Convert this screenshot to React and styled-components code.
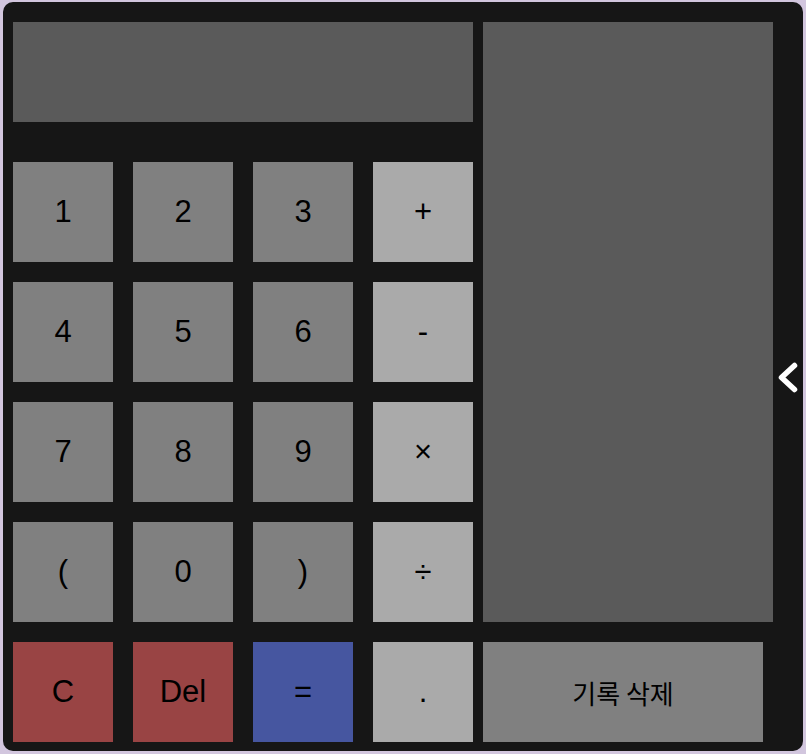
import React from 'react';
import styled, { createGlobalStyle } from 'styled-components';

const GlobalStyle = createGlobalStyle`
  html, body {
    margin: 0;
    padding: 0;
    background-color: #d2c6de;
  }
  body {
    padding: 2px 3px;
    font-family: "Liberation Sans", Arial, "Noto Sans CJK KR", sans-serif;
  }
`;

const Calculator = styled.div`
  position: relative;
  box-sizing: border-box;
  width: 800px;
  height: 749px;
  padding: 20px 10px 0 10px;
  background-color: #161616;
  border-radius: 10px;
  display: flex;
  flex-direction: column;
  gap: 20px;
`;

const TopArea = styled.div`
  display: flex;
  align-items: flex-start;
`;

const LeftColumn = styled.div`
  display: flex;
  flex-direction: column;
  gap: 40px;
  width: 460px;
`;

const Display = styled.div`
  height: 100px;
  background-color: #5a5a5a;
`;

const Keypad = styled.div`
  display: grid;
  grid-template-columns: repeat(4, 100px);
  grid-auto-rows: 100px;
  gap: 20px;
`;

const History = styled.div`
  width: 290px;
  height: 600px;
  margin-left: 10px;
  background-color: #5a5a5a;
`;

const BottomRow = styled.div`
  display: flex;
  gap: 20px;
`;

const keyColors = {
  num: '#808080',
  op: '#aaaaaa',
  danger: '#994444',
  equal: '#4656a0',
};

const Key = styled.button`
  box-sizing: border-box;
  width: 100px;
  height: 100px;
  margin: 0;
  padding: 0;
  border: none;
  border-radius: 0;
  background-color: ${(p) => keyColors[p.$kind || 'num']};
  color: #000;
  font-family: "Liberation Sans", Arial, sans-serif;
  font-size: 31px;
  display: flex;
  align-items: center;
  justify-content: center;
  cursor: pointer;
`;

const ClearHistory = styled(Key)`
  width: 280px;
  margin-left: -10px;
  font-family: "Noto Sans CJK KR", sans-serif;
  font-size: 26px;
`;

const Toggle = styled.button`
  position: absolute;
  right: 3px;
  top: 50%;
  transform: translateY(-50%);
  width: 24px;
  height: 34px;
  padding: 0;
  border: none;
  background: transparent;
  display: flex;
  align-items: center;
  justify-content: center;
  cursor: pointer;
`;

const ChevronLeft = () => (
  <svg width="24" height="34" viewBox="0 0 24 34">
    <polyline
      points="18.5,5.5 5.5,17.5 18.5,29.5"
      fill="none"
      stroke="#fff"
      strokeWidth="5.5"
      strokeLinecap="round"
      strokeLinejoin="round"
    />
  </svg>
);

const keys = [
  ['1', 'num'], ['2', 'num'], ['3', 'num'], ['+', 'op'],
  ['4', 'num'], ['5', 'num'], ['6', 'num'], ['-', 'op'],
  ['7', 'num'], ['8', 'num'], ['9', 'num'], ['×', 'op'],
  ['(', 'num'], ['0', 'num'], [')', 'num'], ['÷', 'op'],
];

const App = () => {
  return (
    <>
      <GlobalStyle />
      <Calculator>
        <TopArea>
          <LeftColumn>
            <Display />
            <Keypad>
              {keys.map(([label, kind]) => (
                <Key key={label} $kind={kind}>{label}</Key>
              ))}
            </Keypad>
          </LeftColumn>
          <History />
        </TopArea>
        <BottomRow>
          <Key $kind="danger">C</Key>
          <Key $kind="danger">Del</Key>
          <Key $kind="equal">=</Key>
          <Key $kind="op">.</Key>
          <ClearHistory>기록 삭제</ClearHistory>
        </BottomRow>
        <Toggle aria-label="toggle history">
          <ChevronLeft />
        </Toggle>
      </Calculator>
    </>
  );
};

export default App;
